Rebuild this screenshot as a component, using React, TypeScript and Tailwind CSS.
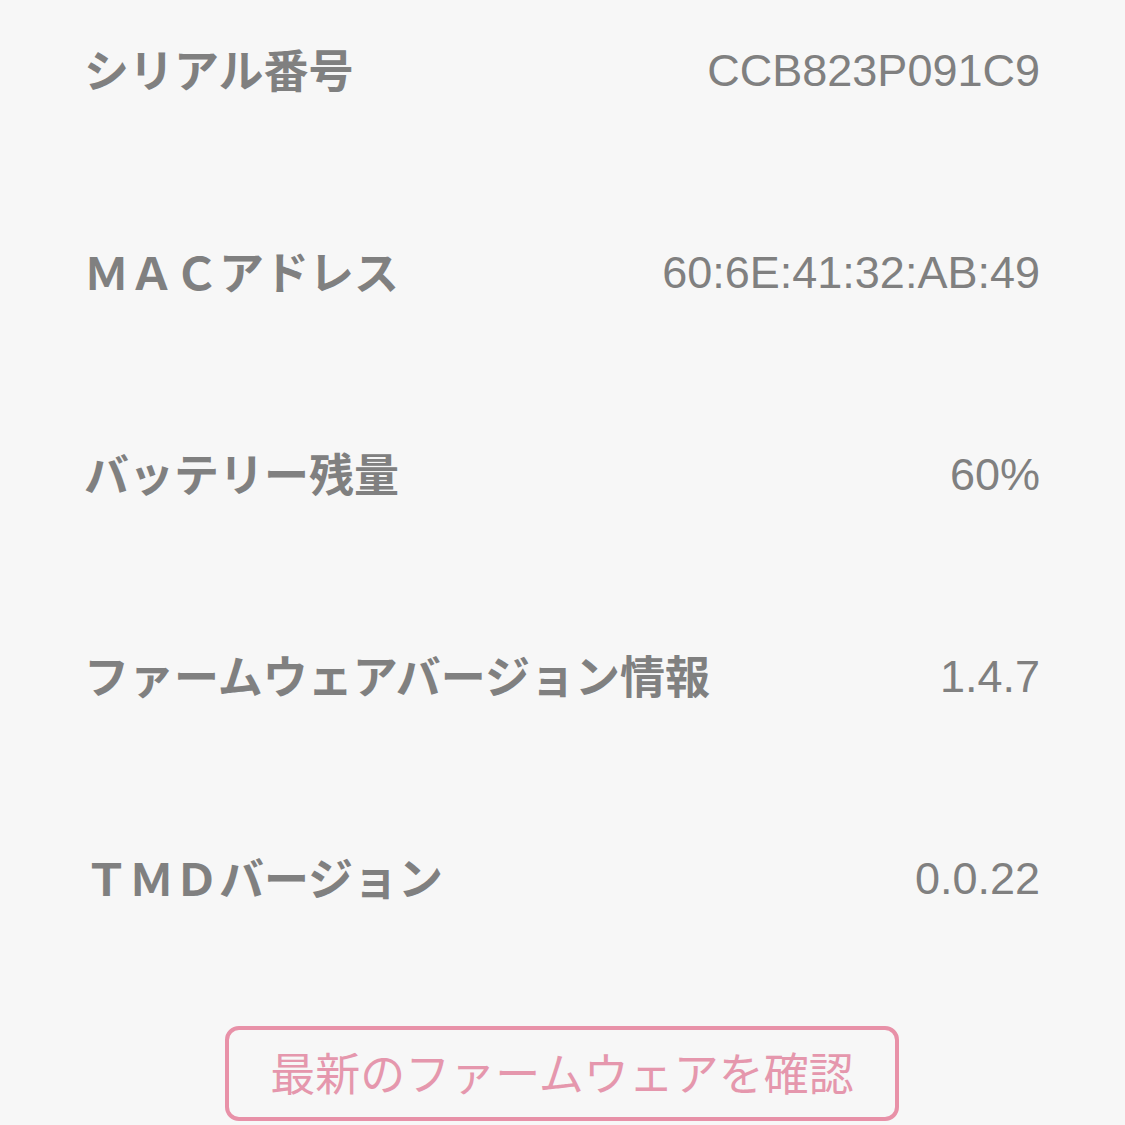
const rows = [
  { label: 'シリアル番号', value: 'CCB823P091C9' },
  { label: 'ＭＡＣアドレス', value: '60:6E:41:32:AB:49' },
  { label: 'バッテリー残量', value: '60%' },
  { label: 'ファームウェアバージョン情報', value: '1.4.7' },
  { label: 'ＴＭＤバージョン', value: '0.0.22' },
]

export default function App() {
  return (
    <div className="min-h-[1125px] w-[1125px] overflow-hidden bg-[#f7f7f7] font-['Noto_Sans_CJK_JP',sans-serif]">
      <div className="flex flex-col pl-[84px] pr-[85px] pt-[40px]">
        {rows.map(row => (
          <div key={row.label} className="flex h-[60px] items-center justify-between mb-[142px] last:mb-0">
            <span className="-mt-[3px] text-[45px] font-bold leading-none text-[#808080]">{row.label}</span>
            <span className="font-['Liberation_Sans',sans-serif] text-[45px] leading-none text-[#808080]">
              {row.value}
            </span>
          </div>
        ))}
      </div>

      <div className="mt-[118px] flex justify-center">
        <button className="ml-[-1px] flex h-[95px] w-[674px] items-center justify-center rounded-[14px] border-4 border-[#e891a8] bg-[#f7f7f7]">
          <span className="-mt-[4px] text-[45px] font-normal leading-none text-[#e597ad]">最新のファームウェアを確認</span>
        </button>
      </div>
    </div>
  )
}
